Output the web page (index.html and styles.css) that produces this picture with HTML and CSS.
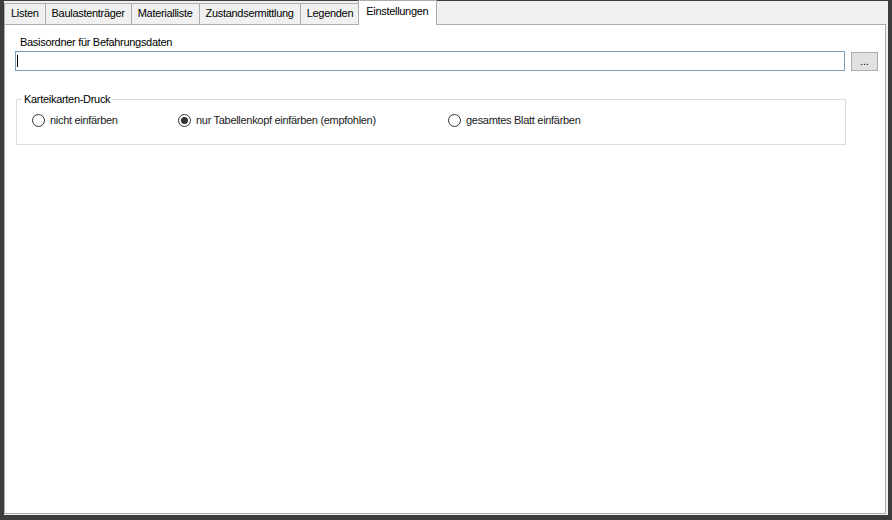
FILE: index.html
```html
<!DOCTYPE html>
<html lang="de">
<head>
    <meta charset="UTF-8">
    <title>Einstellungen</title>
    <link rel="stylesheet" href="styles.css">
</head>
<body>
    <div class="window">
        <div class="tabs">
            <div class="tab">Listen</div>
            <div class="tab">Baulastenträger</div>
            <div class="tab">Materialliste</div>
            <div class="tab">Zustandsermittlung</div>
            <div class="tab">Legenden</div>
            <div class="tab active">Einstellungen</div>
        </div>

        <div class="panel">
            <div class="field-label">Basisordner für Befahrungsdaten</div>
            <div class="path-row">
                <div class="textbox"><span class="caret"></span></div>
                <button class="browse">...</button>
            </div>

            <fieldset class="group">
                <legend>Karteikarten-Druck</legend>
                <div class="radios">
                    <label class="radio"><span class="dot"></span>nicht einfärben</label>
                    <label class="radio checked"><span class="dot"></span>nur Tabellenkopf einfärben (empfohlen)</label>
                    <label class="radio"><span class="dot"></span>gesamtes Blatt einfärben</label>
                </div>
            </fieldset>
        </div>
    </div>
</body>
</html>
```

FILE: styles.css
```css
* {
    margin: 0;
    padding: 0;
    box-sizing: border-box;
}

body {
    background-color: #3a3a3a;
    font-family: "Liberation Sans", Arial, sans-serif;
    font-size: 11px;
    letter-spacing: -0.3px;
    color: #000000;
}

.window {
    width: 892px;
    height: 520px;
    background-color: #f0f0f0;
    border-style: solid;
    border-color: #3c3c3c;
    border-width: 1px 4px 5px 4px;
    display: flex;
    flex-direction: column;
}

/* Tab strip */
.tabs {
    display: flex;
    align-items: flex-end;
    height: 23px;
    position: relative;
    z-index: 1;
}

.tab {
    height: 21px;
    padding: 3px 6px 0 6px;
    line-height: 13px;
    background-color: #f0f0f0;
    border: 1px solid #acacac;
    border-bottom: none;
    margin-right: -1px;
    white-space: nowrap;
}

.tab.active {
    height: 25px;
    margin-bottom: -1px;
    margin-left: -1px;
    margin-right: 0;
    padding: 4px 8px 0 7px;
    background-color: #ffffff;
}

/* Page content */
.panel {
    flex: 1;
    background-color: #ffffff;
    border: 1px solid #acacac;
    margin-right: 2px;
    margin-bottom: 1px;
    padding: 11px 0 0 10px;
}

.field-label {
    line-height: 13px;
    margin-left: 5px;
    margin-bottom: 2px;
}

.path-row {
    display: flex;
    align-items: center;
    gap: 6px;
}

.textbox {
    width: 830px;
    height: 20px;
    border: 1px solid #7f9db9;
    padding: 3px 0 0 1px;
}

.caret {
    display: block;
    width: 1px;
    height: 12px;
    background-color: #000000;
}

.browse {
    width: 27px;
    height: 19px;
    background-color: #e1e1e1;
    border: 1px solid #adadad;
    font-family: "Liberation Sans", Arial, sans-serif;
    font-size: 11px;
    line-height: 11px;
    color: #000000;
}

.group {
    width: 830px;
    margin: 22px 0 0 1px;
    border: 1px solid #dcdcdc;
    padding: 2px 5px 17px 5px;
}

.group legend {
    padding: 0 2px;
    line-height: 13px;
}

.radios {
    display: grid;
    grid-template-columns: 146px 270px auto;
    padding-left: 10px;
    margin-top: 6px;
}

.radio {
    display: flex;
    align-items: center;
    gap: 5px;
    line-height: 13px;
    color: #1a1a1a;
}

.dot {
    width: 13px;
    height: 13px;
    border: 1px solid #333333;
    border-radius: 50%;
    background-color: #ffffff;
    display: flex;
    align-items: center;
    justify-content: center;
}

.radio.checked .dot::after {
    content: "";
    width: 7px;
    height: 7px;
    border-radius: 50%;
    background-color: #333333;
}
```
